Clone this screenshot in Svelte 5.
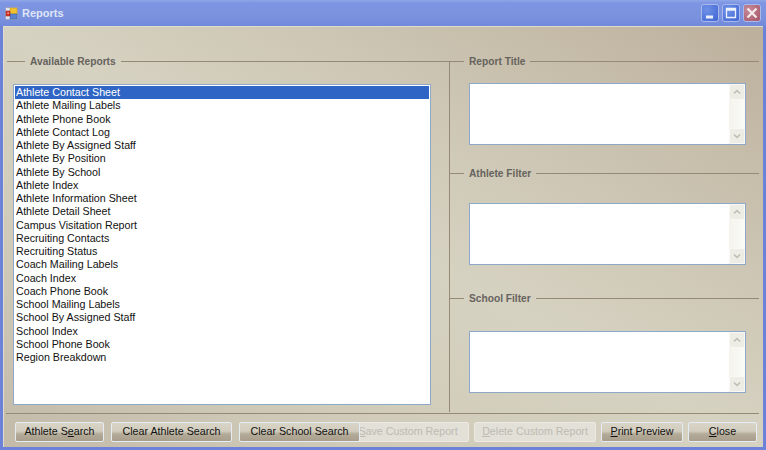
<script>
  const reports = [
    'Athlete Contact Sheet', 'Athlete Mailing Labels', 'Athlete Phone Book', 'Athlete Contact Log',
    'Athlete By Assigned Staff', 'Athlete By Position', 'Athlete By School', 'Athlete Index',
    'Athlete Information Sheet', 'Athlete Detail Sheet', 'Campus Visitation Report', 'Recruiting Contacts',
    'Recruiting Status', 'Coach Mailing Labels', 'Coach Index', 'Coach Phone Book',
    'School Mailing Labels', 'School By Assigned Staff', 'School Index', 'School Phone Book', 'Region Breakdown'
  ];
  let selected = $state(0);

  // right hand column
  const filters = [
    { title: 'Report Title', gap: 'first' },
    { title: 'Athlete Filter', gap: 'second' },
    { title: 'School Filter', gap: 'third' }
  ];
</script>

<div class="window">
  <div class="titlebar">
    <svg class="app-icon" width="13" height="13" viewBox="0 0 13 13">
      <rect x="0.5" y="0.5" width="12" height="12" fill="#dfe4ee" stroke="#8a94b4" stroke-width="0.6" />
      <rect x="5" y="1" width="7" height="6" fill="#f2c230" stroke="#c4951e" stroke-width="0.5" />
      <rect x="5" y="7" width="7" height="5" fill="#5a84d0" stroke="#3a5a9c" stroke-width="0.5" />
      <rect x="1" y="4" width="4" height="5" fill="#d8352a" stroke="#8e2018" stroke-width="0.5" />
      <rect x="2.5" y="5.5" width="1.2" height="1.2" fill="#f6e6e0" />
    </svg>
    <span class="title">Reports</span>
    <div class="controls">
      <div class="ctl blue">
        <svg width="16" height="16" viewBox="0 0 16 16"><rect x="4" y="10.5" width="7" height="3" fill="#eef2fc" /></svg>
      </div>
      <div class="ctl blue">
        <svg width="16" height="16" viewBox="0 0 16 16"><path d="M3.5 3.5h9v9h-9z M3.5 5h9" fill="none" stroke="#eef2fc" stroke-width="1.3" /></svg>
      </div>
      <div class="ctl red">
        <svg width="16" height="16" viewBox="0 0 16 16"><path d="M3.5 3.5l9 9M12.5 3.5l-9 9" fill="none" stroke="#f4ecec" stroke-width="2.2" /></svg>
      </div>
    </div>
  </div>

  <div class="client">
    <div class="main">
      <section class="left">
        <div class="group-head">
          <span class="line stub"></span>
          <span class="group-label">Available Reports</span>
          <span class="line"></span>
        </div>
        <ul class="list">
          {#each reports as r, i}
            <!-- svelte-ignore a11y_click_events_have_key_events, a11y_no_noninteractive_element_interactions -->
            <li class:sel={i === selected} onclick={() => (selected = i)}>{r}</li>
          {/each}
        </ul>
      </section>

      <section class="right">
        {#each filters as f}
          <div class="filter {f.gap}">
            <div class="group-head">
              <span class="line stub"></span>
              <span class="group-label">{f.title}</span>
              <span class="line"></span>
            </div>
            <div class="memo">
              <div class="scroll">
                <div class="arrow">
                  <svg width="8" height="6" viewBox="0 0 8 6"><path d="M1 4.5l3-3 3 3" fill="none" stroke="#bdbdb0" stroke-width="1.5" /></svg>
                </div>
                <div class="arrow">
                  <svg width="8" height="6" viewBox="0 0 8 6"><path d="M1 1.5l3 3 3-3" fill="none" stroke="#bdbdb0" stroke-width="1.5" /></svg>
                </div>
              </div>
            </div>
          </div>
        {/each}
      </section>
    </div>

    <div class="rule"></div>

    <div class="buttons">
      <button class="w89">Athlete S<u>e</u>arch</button>
      <button class="w121">Clear Athlete Search</button>
      <button class="w121 over">Clear School Search</button>
      <button class="w122 save" disabled><u>S</u>ave Custom Report</button>
      <button class="w122" disabled><u>D</u>elete Custom Report</button>
      <button class="w82"><u>P</u>rint Preview</button>
      <button class="w69"><u>C</u>lose</button>
    </div>
  </div>
</div>

<style>
  :global(body) {
    margin: 0;
    font-family: "Liberation Sans", Arial, sans-serif;
  }

  .window {
    width: 766px;
    height: 450px;
    box-sizing: border-box;
    display: flex;
    flex-direction: column;
    background: #6c81d8;
    padding: 0 3px 3px 3px;
    overflow: hidden;
  }

  .titlebar {
    height: 26px;
    flex: none;
    display: flex;
    align-items: center;
    margin: 0 -3px;
    padding: 0 5px 0 5px;
    background: linear-gradient(180deg, #8fa6e8 0%, #7d95e2 12%, #7b93df 60%, #7189da 100%);
  }

  .app-icon {
    flex: none;
    margin-top: 1px;
  }

  .title {
    margin-left: 4px;
    color: #dfe5f6;
    font-size: 11px;
    font-weight: 700;
  }

  .controls {
    margin-left: auto;
    display: flex;
    gap: 3px;
  }

  .ctl {
    width: 18px;
    height: 18px;
    box-sizing: border-box;
    border: 1px solid #a9b9ec;
    border-radius: 3px;
    overflow: hidden;
  }

  .ctl svg {
    display: block;
  }

  .blue {
    background: radial-gradient(circle at 30% 30%, #6f92e8, #3f64d2);
  }

  .red {
    background: radial-gradient(circle at 30% 30%, #c58b98, #a65468);
  }

  .client {
    flex: 1;
    min-height: 0;
    display: flex;
    flex-direction: column;
    background: linear-gradient(to top right, #c3baa8 0%, #d0cbb9 25%, #d6d2c1 50%, #cdc6b4 70%, #bcb09c 100%);
    box-shadow: inset 1px 1px 0 #e0dccd;
  }

  .main {
    height: 386px;
    flex: none;
    display: flex;
    box-sizing: border-box;
    padding: 30px 4px 0 4px;
  }

  .left {
    width: 443px;
    flex: none;
    box-sizing: border-box;
    border-right: 1px solid #968a76;
    margin-top: 5px;
    display: flex;
    flex-direction: column;
    padding-bottom: 6px;
  }

  .group-head {
    display: flex;
    align-items: center;
    gap: 5px;
    height: 13px;
    margin-top: -6px;
  }

  .line {
    flex: 1;
    height: 1px;
    background: #968a76;
  }

  .stub {
    flex: none;
    width: 18px;
  }

  .left .line:last-child {
    margin-right: -1px;
  }

  .group-label {
    font-size: 10.2px;
    font-weight: 700;
    color: #66635d;
    white-space: nowrap;
  }

  .list {
    list-style: none;
    margin: 16px 0 0 6px;
    padding: 1px;
    width: 418px;
    height: 321px;
    box-sizing: border-box;
    background: #fff;
    border: 1px solid #8fa8c8;
  }

  .list li {
    height: 13.25px;
    line-height: 13px;
    padding-left: 1px;
    font-size: 10.7px;
    color: #111;
    white-space: nowrap;
  }

  .list li.sel {
    background: #2f65c4;
    color: #fff;
  }

  .right {
    flex: 1;
    min-width: 0;
    display: flex;
    flex-direction: column;
  }

  .filter .group-head {
    margin-top: 0;
  }

  .filter .stub {
    width: 14px;
  }

  .first {
    margin-top: -1px;
  }

  .second {
    margin-top: 22px;
  }

  .third {
    margin-top: 27px;
  }

  .memo {
    margin: 15px 0 0 19px;
    width: 277px;
    height: 62px;
    box-sizing: border-box;
    background: #fff;
    border: 1px solid #8fa8c8;
    display: flex;
    justify-content: flex-end;
  }

  .second .memo {
    margin-top: 23px;
  }

  .third .memo {
    margin-top: 26px;
  }

  .scroll {
    width: 16px;
    display: flex;
    flex-direction: column;
    justify-content: space-between;
    background: linear-gradient(90deg, #f4f3ec, #fbfbf8);
  }

  .arrow {
    height: 16px;
    display: flex;
    align-items: center;
    justify-content: center;
    background: #eeede5;
    border-radius: 2px;
    border: 1px solid #f8f8f4;
    box-sizing: border-box;
  }

  .rule {
    height: 1px;
    flex: none;
    margin: 1px 4px 0 3px;
    background: #968a76;
  }

  .buttons {
    display: flex;
    gap: 7px;
    padding: 8px 0 0 12px;
  }

  button {
    height: 20px;
    padding: 0 0 2px;
    box-sizing: border-box;
    font-family: inherit;
    font-size: 10.7px;
    color: #111;
    border: 1px solid #e6ecf6;
    border-radius: 2px;
    background: linear-gradient(180deg, #d8d4c6 0%, #d2cdbe 45%, #b3aa98 62%, #a89e8b 100%);
    white-space: nowrap;
  }

  button:disabled {
    color: #bdbbb2;
    background: #e2e0d7;
    border-color: #eceae3;
  }

  .w89 { width: 89px; }
  .w121 { width: 121px; }
  .w122 { width: 122px; }
  .w82 { width: 82px; }
  .w69 { width: 69px; }

  .over {
    position: relative;
    z-index: 1;
  }

  .save {
    margin-left: -20px;
    margin-right: -2px;
  }

  .w82 {
    margin-left: -2px;
  }

  .w69 {
    margin-left: -2px;
  }
</style>
